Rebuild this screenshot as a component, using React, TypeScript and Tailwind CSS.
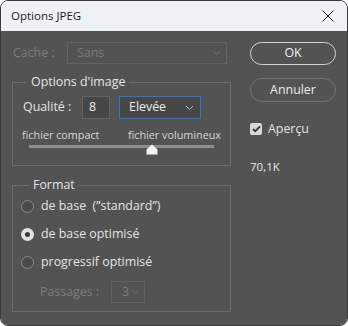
import React from "react";

const font = { fontFamily: '"Open Sans", "Noto Sans", sans-serif' };

function Chevron({ color }: { color: string }) {
  return (
    <svg width="9" height="6" viewBox="0 0 9 6" fill="none">
      <path d="M1 1l3.5 3.5L8 1" stroke={color} strokeWidth="1" />
    </svg>
  );
}

function Radio({ checked, label }: { checked?: boolean; label: string }) {
  return (
    <div className="flex h-[28px] items-center gap-[7px] pl-[8px]">
      {checked ? (
        <span className="flex h-[13px] w-[13px] items-center justify-center rounded-full bg-[#e2e2e2]">
          <span className="h-[5px] w-[5px] rounded-full bg-[#3a3a3a]" />
        </span>
      ) : (
        <span className="h-[13px] w-[13px] rounded-full border border-[#8a8a8a] bg-[#4a4a4a]" />
      )}
      <span className="whitespace-pre text-[12.4px] text-[#e4e4e4]">{label}</span>
    </div>
  );
}

export default function App() {
  return (
    <div className="h-[326px] w-[348px] bg-white" style={font}>
      <div className="flex h-full flex-col overflow-hidden rounded-[8px] border border-[#3a3a3a]">
        <div className="flex h-[30px] shrink-0 items-center justify-between bg-[#eef2f7] pl-[10px] pr-[13px] text-[11.5px] text-[#1b1b1b]">
          <span>Options JPEG</span>
          <svg width="12" height="12" viewBox="0 0 12 12">
            <path d="M0.5 0.5l11 11M11.5 0.5l-11 11" stroke="#1b1b1b" strokeWidth="1" />
          </svg>
        </div>
        <div className="flex flex-1 bg-[#535353] pl-[11px] pt-[11px]">
          <div className="w-[219px]">
            <div className="flex h-[22px] items-center">
              <span className="w-[55px] pl-[1px] text-[12.4px] text-[#7c7c7c]">Cache :</span>
              <div className="flex h-[22px] w-[160px] items-center justify-between border border-[#636363] pl-[9px] pr-[5px] text-[12.4px] text-[#7c7c7c]">
                <span>Sans</span>
                <Chevron color="#6c6c6c" />
              </div>
            </div>

            <fieldset className="mt-[10px] border border-[#6b6b6b] pb-[10px]">
              <legend className="ml-[14px] px-[4px] text-[12.4px] leading-[16px] text-[#e4e4e4]">
                Options d'image
              </legend>
              <div className="mt-[6px] flex h-[23px] items-center pl-[10px]">
                <span className="w-[59px] text-[12.4px] text-[#e4e4e4]">Qualité :</span>
                <div className="flex h-[23px] w-[28px] items-center border border-[#636363] bg-[#474747] pl-[6px] text-[12.4px] text-[#ececec]">
                  8
                </div>
                <div className="ml-[9px] flex h-[23px] w-[82px] items-center justify-between border border-[#2f72d4] bg-[#474747] pl-[9px] pr-[6px] text-[12.4px] text-[#ececec]">
                  <span>Elevée</span>
                  <Chevron color="#bdbdbd" />
                </div>
              </div>
              <div className="mt-[9px] flex h-[14px] items-center justify-between px-[9px] text-[10.8px] leading-[14px] text-[#d6d6d6]">
                <span>fichier compact</span>
                <span>fichier volumineux</span>
              </div>
              <div className="relative mx-[16px] h-[10px]">
                <div className="mt-[3px] h-[3px] bg-[#8d8d8d]" />
                <svg
                  className="absolute left-[117px] top-[-1px]"
                  width="12"
                  height="11"
                  viewBox="0 0 12 11"
                >
                  <path d="M6 0.5L11.5 5.5V10.5H0.5V5.5Z" fill="#f4f4f4" />
                </svg>
              </div>
            </fieldset>

            <fieldset className="mt-[12px] border border-[#6b6b6b] pb-[8px]">
              <legend className="ml-[16px] px-[4px] text-[12.4px] leading-[14px] text-[#e4e4e4]">
                Format
              </legend>
              <Radio label={"de base  (\u201Dstandard\u201D)"} />
              <Radio checked label="de base optimisé" />
              <Radio label="progressif optimisé" />
              <div className="mt-[5px] flex h-[22px] items-center pl-[27px]">
                <span className="w-[71px] text-[12.4px] text-[#7c7c7c]">Passages :</span>
                <div className="flex h-[22px] w-[34px] items-center justify-between border border-[#636363] pl-[10px] pr-[4px] text-[12.4px] text-[#7c7c7c]">
                  <span>3</span>
                  <Chevron color="#6c6c6c" />
                </div>
              </div>
            </fieldset>
          </div>

          <div className="ml-[19px] flex w-[86px] flex-col">
            <button className="flex h-[23px] items-center justify-center rounded-full border-[1.5px] border-[#d4d4d4] text-[12.4px] text-[#f2f2f2]">
              OK
            </button>
            <button className="mt-[13px] flex h-[24px] items-center justify-center rounded-full border-[1.5px] border-[#727272] text-[12.4px] text-[#ececec]">
              Annuler
            </button>
            <div className="mt-[19px] flex h-[16px] items-center gap-[6px]">
              <span className="flex h-[12px] w-[12px] items-center justify-center rounded-[2px] bg-[#d8d8d8]">
                <svg width="9" height="8" viewBox="0 0 9 8" fill="none">
                  <path d="M1 4l2.3 2.3L8 1.3" stroke="#2e2e2e" strokeWidth="1.8" />
                </svg>
              </span>
              <span className="text-[12.4px] text-[#e4e4e4]">Aperçu</span>
            </div>
            <div className="mt-[23px] h-[14px] text-[11.5px] leading-[14px] text-[#e4e4e4]">70,1K</div>
          </div>
        </div>
      </div>
    </div>
  );
}
